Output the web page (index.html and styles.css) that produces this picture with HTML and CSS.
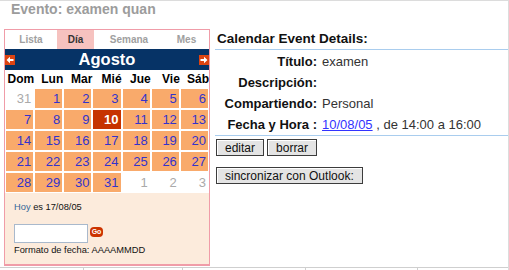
FILE: index.html
```html
<!DOCTYPE html>
<html lang="es">
<head>
  <meta charset="UTF-8">
  <title>Evento: examen</title>
  <link rel="stylesheet" href="styles.css">
</head>
<body>
<div class="page">

  <!-- Page title -->
  <div class="page-title">Evento: examen quan</div>

  <div class="main">

    <!-- Mini calendar -->
    <div class="calendar">
      <div class="tabs">
        <span class="tab tab-lista">Lista</span>
        <span class="tab tab-dia active">Día</span>
        <span class="tab tab-semana">Semana</span>
        <span class="tab tab-mes">Mes</span>
      </div>

      <div class="month-bar">
        <svg class="arrow" width="10" height="10" viewBox="0 0 10 10"><rect width="10" height="10" fill="#dd4411"/><path d="M1.5 5 L5 1.8 V4 H8.5 V6 H5 V8.2 Z" fill="#fff"/></svg>
        <span class="month-name">Agosto</span>
        <svg class="arrow" width="10" height="10" viewBox="0 0 10 10"><rect width="10" height="10" fill="#dd4411"/><path d="M8.5 5 L5 1.8 V4 H1.5 V6 H5 V8.2 Z" fill="#fff"/></svg>
      </div>

      <div class="days">
        <span class="dow">Dom</span><span class="dow">Lun</span><span class="dow">Mar</span><span class="dow">Mié</span><span class="dow">Jue</span><span class="dow">Vie</span><span class="dow">Sáb</span>

        <span class="day other">31</span><span class="day">1</span><span class="day">2</span><span class="day">3</span><span class="day">4</span><span class="day">5</span><span class="day">6</span>
        <span class="day">7</span><span class="day">8</span><span class="day">9</span><span class="day today">10</span><span class="day">11</span><span class="day">12</span><span class="day">13</span>
        <span class="day">14</span><span class="day">15</span><span class="day">16</span><span class="day">17</span><span class="day">18</span><span class="day">19</span><span class="day">20</span>
        <span class="day">21</span><span class="day">22</span><span class="day">23</span><span class="day">24</span><span class="day">25</span><span class="day">26</span><span class="day">27</span>
        <span class="day">28</span><span class="day">29</span><span class="day">30</span><span class="day">31</span><span class="day other">1</span><span class="day other">2</span><span class="day other">3</span>
      </div>

      <div class="goto">
        <div class="today-line"><a href="#" class="today-link">Hoy</a> es 17/08/05</div>
        <div class="goto-row">
          <input type="text" class="goto-input">
          <span class="go-btn">Go</span>
        </div>
        <div class="format-hint">Formato de fecha: AAAAMMDD</div>
      </div>
    </div>

    <!-- Event details -->
    <div class="details">
      <div class="details-title">Calendar Event Details:</div>
      <div class="details-rows">
        <span class="label">Título:</span><span class="value">examen</span>
        <span class="label">Descripción:</span><span class="value"></span>
        <span class="label">Compartiendo:</span><span class="value">Personal</span>
        <span class="label">Fecha y Hora :</span><span class="value"><a href="#" class="date-link">10/08/05</a> , de 14:00 a 16:00</span>
      </div>
      <div class="actions">
        <button class="btn">editar</button>
        <button class="btn">borrar</button>
      </div>
      <div class="actions sync">
        <button class="btn">sincronizar con Outlook:</button>
      </div>
    </div>
  </div>

  <!-- top of the list below (cut off) -->
  <div class="list-head">
    <span class="col c1"></span><span class="col c2"></span><span class="col c3"></span><span class="col c4"></span><span class="col c5"></span>
  </div>

</div>
</body>
</html>
```

FILE: styles.css
```css
/* Reset */
html, body {
  margin: 0;
  padding: 0;
  overflow: hidden;
  background: #fff;
  font-family: "Liberation Sans", Arial, sans-serif;
}

.page {
  width: 509px;
  height: 270px;
  box-sizing: border-box;
  overflow: hidden;
  border-top: 1px solid #dcdcdc;
  border-right: 1px solid #dcdcdc;
}

.page-title {
  padding: 0 0 12px 11px;
  font-size: 14px;
  line-height: 16px;
  font-weight: bold;
  color: #9c9c9c;
  white-space: nowrap;
}

.main {
  display: flex;
  align-items: flex-start;
  padding-left: 4px;
}

/* Calendar box */
.calendar {
  width: 206px;
  box-sizing: border-box;
  border: 1px solid #f09ca8;
  border-bottom-width: 2px;
}

.tabs {
  display: flex;
  height: 19px;
  background: #fff;
}

.tab {
  display: flex;
  align-items: center;
  justify-content: center;
  font-size: 10px;
  font-weight: bold;
  color: #a0a0a0;
}

.tab-lista { width: 52px; }
.tab-dia { width: 37px; }
.tab-semana { width: 70px; }
.tab-mes { width: 45px; }

.tab.active {
  background: #f6c2bf;
  color: #333;
}

.month-bar {
  display: flex;
  justify-content: space-between;
  align-items: center;
  height: 21px;
  background: #063366;
}

.month-name {
  color: #fff;
  font-size: 16.5px;
  font-weight: bold;
}

.arrow {
  display: block;
}

.days {
  display: grid;
  grid-template-columns: repeat(7, 1fr);
  grid-auto-rows: 19px;
  grid-template-rows: 16px;
  gap: 2px;
  padding: 1px 1px;
  background: #fff;
}

.dow {
  font-size: 12px;
  line-height: 16px;
  font-weight: bold;
  color: #000;
  text-align: right;
  margin-right: -1px;
}

.day {
  background: #f9aa6b;
  color: #3333cc;
  font-size: 13px;
  line-height: 19px;
  text-align: right;
  padding-right: 2px;
}

.day.other {
  background: #fff;
  color: #aaa;
}

.day.today {
  background: #c63300;
  color: #fff;
  font-weight: bold;
}

/* Go to date */
.goto {
  background: #fcebdc;
  padding: 8px 9px 8px 9px;
  font-size: 9.3px;
  color: #111;
}

.today-line {
  line-height: 12px;
}

.today-link {
  color: #336699;
  text-decoration: none;
}

.goto-row {
  display: flex;
  align-items: flex-start;
  gap: 2px;
  margin-top: 11px;
}

.goto-input {
  width: 74px;
  height: 19px;
  box-sizing: border-box;
  margin: 0;
  border: 1px solid #a9b9cc;
  background: #fff;
}

.go-btn {
  margin-top: 3px;
  width: 13px;
  height: 10px;
  border-radius: 4px;
  background: #cc3300;
  color: #fff;
  font-size: 7px;
  font-weight: bold;
  line-height: 10px;
  text-align: center;
}

.format-hint {
  margin-top: 1px;
  line-height: 12px;
}

/* Details column */
.details {
  flex: 1;
  margin-left: 5px;
  padding-top: 2px;
  color: #111;
}

.details-title {
  font-size: 13.5px;
  line-height: 16px;
  font-weight: bold;
  padding: 0 0 2px 2px;
  border-bottom: 1px solid #a9cdee;
}

.details-rows {
  display: grid;
  grid-template-columns: 102px 1fr;
  grid-auto-rows: 21px;
  column-gap: 5px;
  align-items: center;
  margin: 1px 0 1px;
  border-bottom: 1px solid #a9cdee;
  font-size: 13px;
}

.label {
  font-weight: bold;
  text-align: right;
  white-space: nowrap;
}

.value {
  color: #333;
  white-space: nowrap;
}

.date-link {
  color: #3333ff;
}

.actions {
  display: flex;
  gap: 3px;
  margin-top: 3px;
  padding-left: 1px;
}

.actions.sync {
  margin-top: 11px;
}

.btn {
  height: 17px;
  margin: 0;
  padding: 0 8px;
  font-family: "Liberation Sans", Arial, sans-serif;
  font-size: 12px;
  line-height: 14px;
  color: #111;
  background: #e4e4e4;
  border: 1px solid #3c3c3c;
  border-radius: 0;
  box-shadow: inset 1px 1px 0 #fff;
}

/* cut-off list header at the bottom */
.list-head {
  display: flex;
  margin-top: 1px;
  height: 3px;
  border-top: 1px solid #cfcfcf;
}

.col {
  border-left: 1px solid #cfcfcf;
}

.c1 { width: 83px; border-left: none; }
.c2 { width: 98px; }
.c3 { width: 122px; }
.c4 { width: 111px; }
.c5 { flex: 1; }
```
